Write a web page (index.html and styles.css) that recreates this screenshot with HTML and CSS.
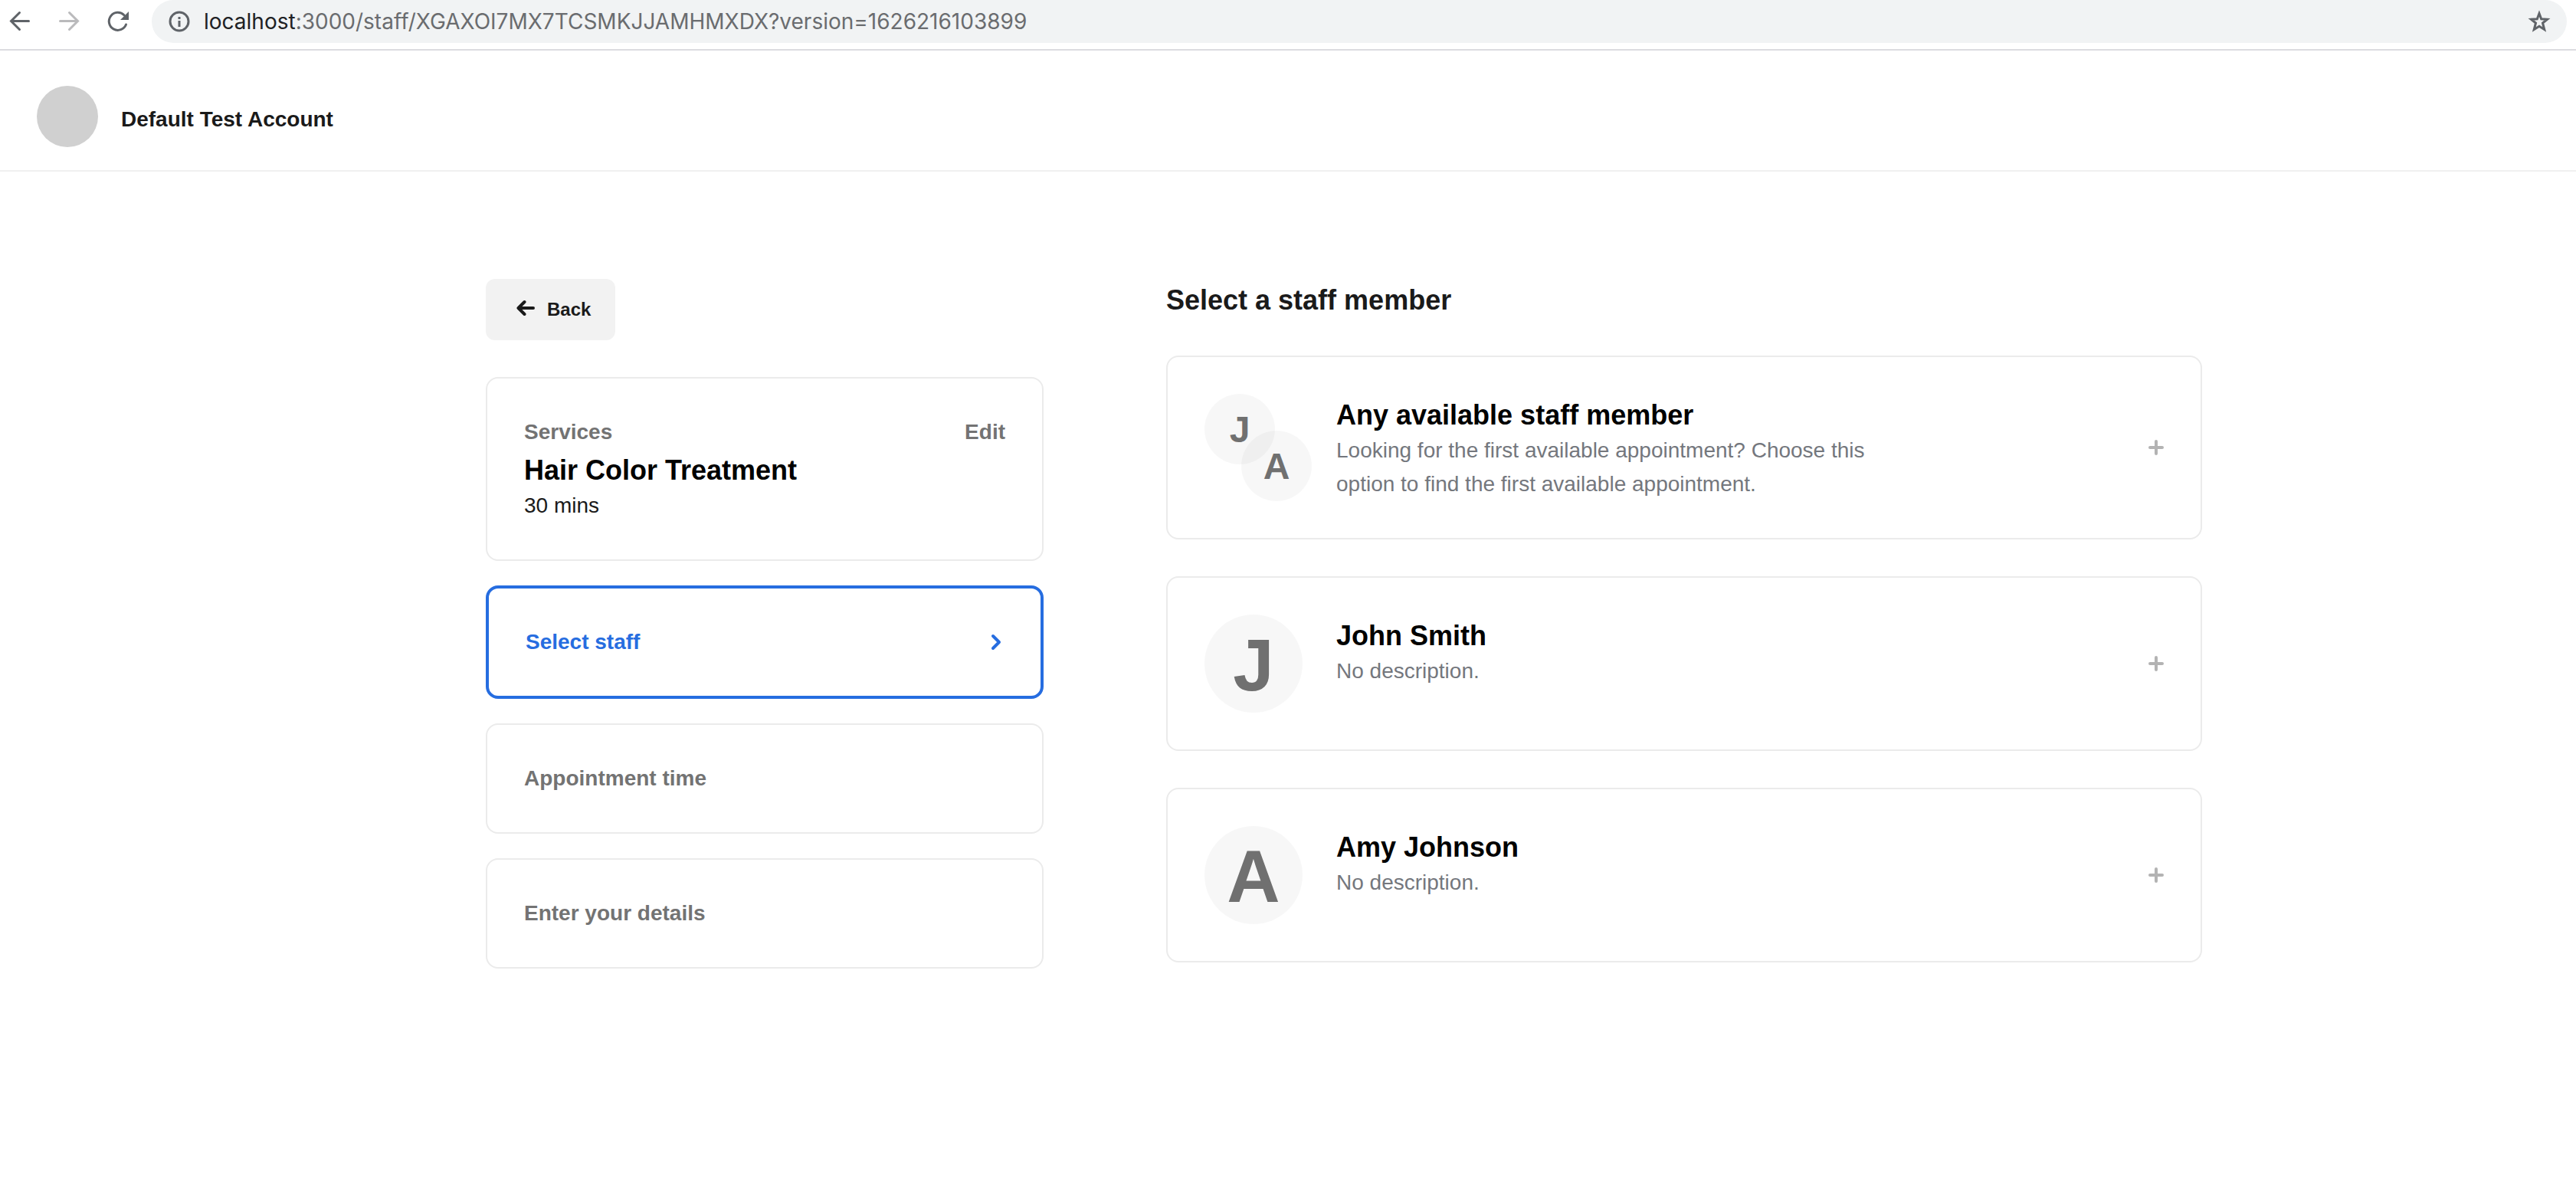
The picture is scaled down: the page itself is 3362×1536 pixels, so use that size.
FILE: index.html
```html
<!DOCTYPE html>
<html lang="en">
<head>
<meta charset="utf-8">
<title>Select a staff member</title>
<link rel="stylesheet" href="styles.css">
</head>
<body>
<nav class="toolbar" aria-label="Browser">
  <button class="tool" type="button" aria-label="Back"><svg viewBox="0 0 32 32"><path d="M27.500 15.500H5M15.500 4.500l-11 11 11 11"/></svg></button>
  <button class="tool tool-off" type="button" aria-label="Forward" disabled><svg viewBox="0 0 32 32"><path d="M4.500 15.500H27M16.500 4.500l11 11-11 11"/></svg></button>
  <button class="tool" type="button" aria-label="Reload"><svg viewBox="0 0 32 32"><path d="M26.500 20A11.500 11.500 0 1 1 24 7.800"/><path class="solid" d="M30 3v11H19z"/></svg></button>
  <div class="address">
    <svg class="info" viewBox="0 0 32 32"><circle cx="16" cy="16" r="12"/><path d="M16 15v8M16 10v3"/></svg>
    <div class="url"><span class="host">localhost</span>:3000/staff/XGAXOI7MX7TCSMKJJAMHMXDX?version=1626216103899</div>
    <button class="tool star" type="button" aria-label="Bookmark"><svg viewBox="0 0 32 32"><path d="M16 5.500L18.700 12.700 26.500 13.200 20.500 18 22.700 26.500 16 22.200 9.300 26.500 11.500 18 5.500 13.200 13.300 12.700z"/></svg></button>
  </div>
</nav>
<header class="account">
  <div class="account-avatar"></div>
  <div class="account-name">Default Test Account</div>
</header>
<main class="booking">
  <section class="steps">
    <button class="back" type="button"><svg viewBox="0 0 24 24"><path d="M22 12H3M10.500 4l-8 8 8 8"/></svg>Back</button>
    <div class="card">
      <div class="card-head"><span class="label">Services</span><a class="label" href="#">Edit</a></div>
      <h2 class="title">Hair Color Treatment</h2>
      <p class="duration">30 mins</p>
    </div>
    <a class="card step step-active" href="#">Select staff<svg viewBox="0 0 20 24"><path d="M6 4l8 8-8 8"/></svg></a>
    <div class="card step">Appointment time</div>
    <div class="card step">Enter your details</div>
  </section>
  <section class="staff">
    <h1 class="title heading">Select a staff member</h1>
    <button class="card member" type="button">
      <span class="avatars pair"><span class="avatar small">J</span><span class="avatar small second">A</span></span>
      <span class="about"><span class="title">Any available staff member</span><span class="description">Looking for the first available appointment? Choose this option to find the first available appointment.</span></span>
      <svg class="plus" viewBox="0 0 20 20"><path d="M2 10h16M10 2v16"/></svg>
    </button>
    <button class="card member" type="button">
      <span class="avatars"><span class="avatar">J</span></span>
      <span class="about"><span class="title">John Smith</span><span class="description">No description.</span></span>
      <svg class="plus" viewBox="0 0 20 20"><path d="M2 10h16M10 2v16"/></svg>
    </button>
    <button class="card member" type="button">
      <span class="avatars"><span class="avatar">A</span></span>
      <span class="about"><span class="title">Amy Johnson</span><span class="description">No description.</span></span>
      <svg class="plus" viewBox="0 0 20 20"><path d="M2 10h16M10 2v16"/></svg>
    </button>
  </section>
</main>
</body>
</html>
```
FILE: styles.css
```css
* { box-sizing: border-box; }
body {
  margin: 0;
  background: #fff;
  color: #1a1a1a;
  font: 28px/44px "Liberation Sans", Arial, sans-serif;
}
h1, h2, p { margin: 0; }
button { font: inherit; color: inherit; border: 0; background: none; padding: 0; text-align: left; cursor: pointer; }
a { color: inherit; text-decoration: none; }
svg { flex: none; fill: none; stroke: currentColor; stroke-width: 4; stroke-linecap: round; stroke-linejoin: round; }

.toolbar {
  display: flex;
  align-items: flex-start;
  gap: 32px;
  height: 66px;
  padding: 0 12px 0 10px;
  border-bottom: 2px solid #dcdce0;
}
.tool { display: flex; align-items: center; height: 56px; color: #5f6368; }
.tool svg, .info { width: 32px; height: 32px; stroke-width: 3; stroke-linejoin: miter; }
.info { stroke-linecap: butt; }
.tool-off { color: #bababc; }
.tool .solid { fill: currentColor; stroke: none; }
.address {
  flex: 1;
  display: flex;
  align-items: center;
  gap: 16px;
  height: 56px;
  margin-left: -4px;
  padding: 0 20px;
  border-radius: 28px;
  background: #f1f3f4;
  color: #5f6368;
}
.url { flex: 1; font: 28px/56px Inter, Roboto, sans-serif; color: #6a6c6f; }
.host { color: #202124; }

.account {
  display: flex;
  align-items: center;
  gap: 30px;
  padding: 46px 48px 30px;
  border-bottom: 2px solid #f0f0f0;
}
.account-avatar { width: 80px; height: 80px; border-radius: 50%; background: #d0d0d0; }
.account-name { padding-top: 8px; font-weight: bold; }

.booking {
  display: grid;
  grid-template-columns: 728fr 1352fr;
  gap: 160px;
  max-width: 2386px;
  margin: 0 auto;
  padding: 140px 0 140px 146px;
}
.steps { display: flex; flex-direction: column; align-items: stretch; gap: 32px; }
.back {
  display: flex;
  align-items: center;
  align-self: flex-start;
  gap: 16px;
  height: 80px;
  margin-bottom: 16px;
  padding: 0 32px 0 40px;
  border-radius: 12px;
  background: #f2f2f2;
  font-size: 24px;
  font-weight: bold;
}
.back svg { width: 24px; height: 24px; margin-bottom: 4px; }

.card { padding: 48px; border: 2px solid #ebebeb; border-radius: 16px; background: #fff; }
.card-head { display: flex; justify-content: space-between; }
.label, .step { color: #737373; font-weight: bold; }
.title {
  display: block;
  padding-top: 4px;
  color: #000;
  font-size: 36px;
  line-height: 48px;
  font-weight: bold;
}
.step { display: flex; align-items: center; justify-content: space-between; }
.step-active { border: 4px solid #266de0; color: #266de0; }
.step-active svg { width: 20px; height: 24px; }

.staff { display: flex; flex-direction: column; gap: 48px; }
.heading { color: #1a1a1a; }
.member { display: flex; align-items: flex-start; gap: 32px; }
.avatars { flex: none; width: 140px; }
.pair { display: grid; height: 140px; }
.avatar {
  display: block;
  width: 128px;
  height: 128px;
  border-radius: 50%;
  background: rgba(0, 0, 0, 0.03);
  color: #707070;
  font-size: 96px;
  line-height: 132px;
  font-weight: bold;
  text-align: center;
}
.small { grid-area: 1 / 1; width: 92px; height: 92px; font-size: 48px; line-height: 94px; }
.second { place-self: end; }
.about { flex: 1; }
.description { display: block; max-width: 720px; color: #74777d; }
.plus { align-self: center; width: 20px; height: 20px; color: #b3b3b3; }
```
